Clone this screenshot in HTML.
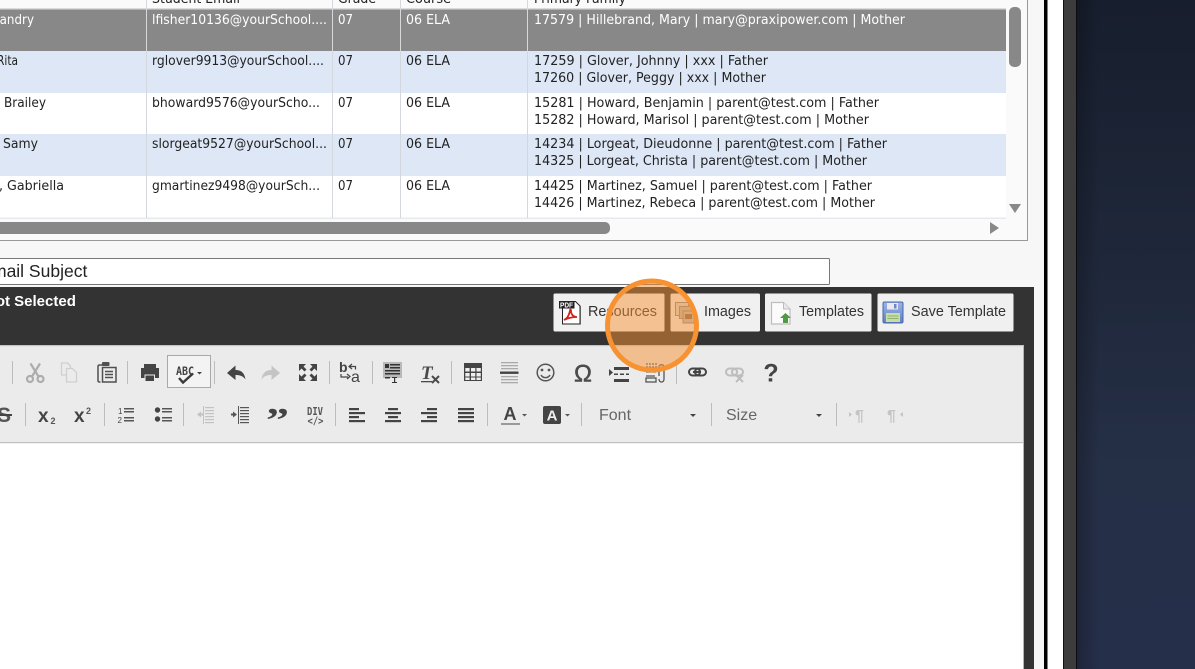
<!DOCTYPE html>
<html><head><meta charset="utf-8"><style>
html,body{margin:0;padding:0;width:1195px;height:669px;overflow:hidden;background:#f7f7f7}
svg{display:block}
.g text{font-family:"DejaVu Sans",sans-serif;font-size:13px;fill:#222}
.g text.w{fill:#fff}
.b text{font-family:"Liberation Sans",sans-serif;font-size:14.5px;fill:#333}
</style></head><body>
<svg width="1195" height="669" viewBox="0 0 1195 669" xmlns="http://www.w3.org/2000/svg">
<defs>
<linearGradient id="nv" x1="0" y1="0" x2="0" y2="1"><stop offset="0" stop-color="#171e2d"/><stop offset=".45" stop-color="#20293c"/><stop offset=".7" stop-color="#252f46"/><stop offset="1" stop-color="#262f4a"/></linearGradient>
<linearGradient id="nh" x1="0" y1="0" x2="1" y2="0"><stop offset="0" stop-color="#000" stop-opacity=".22"/><stop offset="1" stop-color="#000" stop-opacity="0"/></linearGradient>
<linearGradient id="fl" x1="0" y1="0" x2="0" y2="1"><stop offset="0" stop-color="#9db4e8"/><stop offset="1" stop-color="#5f7fc8"/></linearGradient>
</defs>
<rect width="1195" height="669" fill="#f7f7f7"/>
<!-- right side -->
<rect x="1044" y="0" width="3.5" height="669" fill="#000"/>
<rect x="1047.5" y="0" width="15.5" height="669" fill="#fff"/>
<rect x="1063" y="0" width="14" height="669" fill="#3c3c3c"/>
<rect x="1063" y="0" width="1" height="669" fill="#111"/>
<rect x="1076" y="0" width="1.2" height="669" fill="#0c0c10"/>
<rect x="1077" y="0" width="118" height="669" fill="url(#nv)"/>
<rect x="1077" y="0" width="22" height="669" fill="url(#nh)"/>

<!-- grid panel -->
<rect x="-2" y="-2" width="1029.5" height="242.5" fill="#fafafa" stroke="#999" stroke-width="1"/>
<rect x="0" y="8" width="1006" height="1.5" fill="#dcdcdc"/>
<rect x="0" y="9.5" width="1006" height="41.5" fill="#888"/>
<rect x="0" y="51" width="1006" height="42" fill="#dde7f6"/>
<rect x="0" y="93" width="1006" height="41" fill="#fff"/>
<rect x="0" y="134" width="1006" height="42" fill="#dde7f6"/>
<rect x="0" y="176" width="1006" height="42" fill="#fff"/>
<rect x="0" y="217.5" width="1006" height="1.5" fill="#e6e9ee"/>
<g fill="#d4d8de">
<rect x="146" y="0" width="1" height="218"/><rect x="332" y="0" width="1" height="218"/><rect x="400" y="0" width="1" height="218"/><rect x="527" y="0" width="1" height="218"/>
</g>
<g fill="#d8d8d8"><rect x="146" y="9.5" width="1" height="41.5"/><rect x="332" y="9.5" width="1" height="41.5"/><rect x="400" y="9.5" width="1" height="41.5"/><rect x="527" y="9.5" width="1" height="41.5"/></g>
<g class="g">
<text x="152" y="3" textLength="88" lengthAdjust="spacingAndGlyphs">Student Email</text>
<text x="338" y="3" textLength="38" lengthAdjust="spacingAndGlyphs">Grade</text>
<text x="406" y="3" textLength="45" lengthAdjust="spacingAndGlyphs">Course</text>
<text x="534" y="3" textLength="92" lengthAdjust="spacingAndGlyphs">Primary Family</text>

<text class="w" x="-7" y="24" textLength="41" lengthAdjust="spacingAndGlyphs">Landry</text>
<text class="w" x="152" y="24" textLength="175" lengthAdjust="spacingAndGlyphs">lfisher10136@yourSchool....</text>
<text class="w" x="338" y="24" textLength="15" lengthAdjust="spacingAndGlyphs">07</text>
<text class="w" x="406" y="24" textLength="44" lengthAdjust="spacingAndGlyphs">06 ELA</text>
<text class="w" x="534" y="24" textLength="371" lengthAdjust="spacingAndGlyphs">17579 | Hillebrand, Mary | mary@praxipower.com | Mother</text>

<text x="-3" y="65" textLength="21" lengthAdjust="spacingAndGlyphs">Rita</text>
<text x="152" y="65" textLength="172" lengthAdjust="spacingAndGlyphs">rglover9913@yourSchool....</text>
<text x="338" y="65" textLength="15" lengthAdjust="spacingAndGlyphs">07</text>
<text x="406" y="65" textLength="44" lengthAdjust="spacingAndGlyphs">06 ELA</text>
<text x="534" y="65" textLength="234" lengthAdjust="spacingAndGlyphs">17259 | Glover, Johnny | xxx | Father</text>
<text x="534" y="82" textLength="232" lengthAdjust="spacingAndGlyphs">17260 | Glover, Peggy | xxx | Mother</text>

<text x="4" y="107" textLength="42" lengthAdjust="spacingAndGlyphs">Brailey</text>
<text x="152" y="107" textLength="168" lengthAdjust="spacingAndGlyphs">bhoward9576@yourScho...</text>
<text x="338" y="107" textLength="15" lengthAdjust="spacingAndGlyphs">07</text>
<text x="406" y="107" textLength="44" lengthAdjust="spacingAndGlyphs">06 ELA</text>
<text x="534" y="107" textLength="345" lengthAdjust="spacingAndGlyphs">15281 | Howard, Benjamin | parent@test.com | Father</text>
<text x="534" y="124" textLength="335" lengthAdjust="spacingAndGlyphs">15282 | Howard, Marisol | parent@test.com | Mother</text>

<text x="3" y="148" textLength="35" lengthAdjust="spacingAndGlyphs">Samy</text>
<text x="152" y="148" textLength="175" lengthAdjust="spacingAndGlyphs">slorgeat9527@yourSchool...</text>
<text x="338" y="148" textLength="15" lengthAdjust="spacingAndGlyphs">07</text>
<text x="406" y="148" textLength="44" lengthAdjust="spacingAndGlyphs">06 ELA</text>
<text x="534" y="148" textLength="353" lengthAdjust="spacingAndGlyphs">14234 | Lorgeat, Dieudonne | parent@test.com | Father</text>
<text x="534" y="165" textLength="333" lengthAdjust="spacingAndGlyphs">14325 | Lorgeat, Christa | parent@test.com | Mother</text>

<text x="-1" y="190" textLength="65" lengthAdjust="spacingAndGlyphs">, Gabriella</text>
<text x="152" y="190" textLength="168" lengthAdjust="spacingAndGlyphs">gmartinez9498@yourSch...</text>
<text x="338" y="190" textLength="15" lengthAdjust="spacingAndGlyphs">07</text>
<text x="406" y="190" textLength="44" lengthAdjust="spacingAndGlyphs">06 ELA</text>
<text x="534" y="190" textLength="338" lengthAdjust="spacingAndGlyphs">14425 | Martinez, Samuel | parent@test.com | Father</text>
<text x="534" y="207" textLength="341" lengthAdjust="spacingAndGlyphs">14426 | Martinez, Rebeca | parent@test.com | Mother</text>
</g>
<!-- scrollbars -->
<rect x="-10" y="222" width="620" height="12" rx="5" fill="#888"/>
<path d="M990 222l9 6-9 6z" fill="#888"/>
<rect x="1009" y="7" width="12" height="60" rx="5" fill="#888"/>
<path d="M1009 204h12l-6 9z" fill="#888"/>

<!-- subject -->
<rect x="-3" y="258.5" width="832.5" height="26" rx="1" fill="#fff" stroke="#777"/>
<text x="-19.7" y="277" font-family="Liberation Sans, sans-serif" font-size="17.5" fill="#222">Email Subject</text>

<!-- dark panel -->
<rect x="0" y="287" width="1034" height="382" fill="#333"/>
<text x="-15" y="306" font-family="Liberation Sans, sans-serif" font-size="15" font-weight="700" fill="#fff">Not Selected</text>

<!-- buttons -->
<g fill="#f0f0f0">
<rect x="553.5" y="293.5" width="111" height="38" rx="1.5"/>
<rect x="670.5" y="293.5" width="89.5" height="38" rx="1.5"/>
<rect x="765" y="293.5" width="106.5" height="38" rx="1.5"/>
<rect x="877.5" y="293.5" width="136" height="38" rx="1.5"/>
</g>
<g class="b">
<text x="588" y="316" textLength="69" lengthAdjust="spacingAndGlyphs">Resources</text>
<text x="704" y="316" textLength="47" lengthAdjust="spacingAndGlyphs">Images</text>
<text x="799" y="316" textLength="65" lengthAdjust="spacingAndGlyphs">Templates</text>
<text x="911" y="316" textLength="95" lengthAdjust="spacingAndGlyphs">Save Template</text>
</g>
<!-- pdf icon -->
<path d="M562.5 301.5h13l4.5 4.5v18h-17.5z" fill="#fff" stroke="#222" stroke-width="1"/>
<rect x="579.5" y="306" width="1.2" height="18.5" fill="#222"/>
<rect x="559" y="301" width="15.5" height="7.5" fill="#222"/>
<text x="560" y="307.5" font-family="Liberation Sans, sans-serif" font-size="7" font-weight="700" fill="#fff" textLength="13" lengthAdjust="spacingAndGlyphs">PDF</text>
<path d="M564 320c3-1 5-5 6-9 0-2 1-2 1 0 0 3 2 6 6 6-4 0-9 1-13 3z" fill="none" stroke="#d5231d" stroke-width="1.8"/>
<!-- images icon -->
<g stroke="#8a8a8a" stroke-width="1" fill="#d8d8d8">
<rect x="675.5" y="302.5" width="13" height="13"/><rect x="679.5" y="306.5" width="12" height="12" fill="#c9b9a4"/><rect x="683" y="311" width="11" height="12" fill="#bcbcbc"/>
</g>
<rect x="685" y="314" width="7" height="5" fill="#8b6b50"/>
<!-- template icon -->
<path d="M771.5 302.5h12l6.500 6.500v15h-18.500z" fill="#fbfbfb" stroke="#bdbdbd" stroke-width="1.200"/>
<path d="M783.5 302.5v6.500h6.500" fill="#e8e8e8" stroke="#bdbdbd"/>
<path d="M780 318l5.500-5 5.500 5h-3v5h-5v-5z" fill="#4f9a45"/>
<!-- save icon -->
<rect x="883" y="302" width="20" height="21" rx="1.500" fill="url(#fl)" stroke="#4a66a8"/>
<rect x="887" y="303" width="11" height="6.500" fill="#e8e8ee"/><rect x="894" y="304" width="2.500" height="4.500" fill="#6d86c4"/>
<rect x="886" y="313" width="14" height="9" fill="#c6dfa0"/><rect x="887.500" y="315.500" width="11" height="1" fill="#8fb070"/><rect x="887.500" y="318" width="11" height="1" fill="#8fb070"/>

<!-- editor -->
<rect x="0" y="346" width="1024" height="323" fill="#fff"/>
<rect x="0" y="346" width="1024" height="96" fill="#ebebeb"/>
<rect x="0" y="345" width="1024" height="1.200" fill="#c4c4c4"/>
<rect x="0" y="442" width="1024" height="1.200" fill="#c0c0c0"/>
<rect x="1023" y="346" width="1" height="323" fill="#b5b5b5"/>

<!-- separators -->
<g fill="#bdbdbd">
<rect x="12" y="361" width="1" height="23"/><rect x="127" y="361" width="1" height="23"/><rect x="214" y="361" width="1" height="23"/><rect x="329" y="361" width="1" height="23"/><rect x="372" y="361" width="1" height="23"/><rect x="451" y="361" width="1" height="23"/><rect x="676" y="361" width="1" height="23"/>
<rect x="25" y="403" width="1" height="23"/><rect x="104" y="403" width="1" height="23"/><rect x="183" y="403" width="1" height="23"/><rect x="335" y="403" width="1" height="23"/><rect x="487" y="403" width="1" height="23"/><rect x="581" y="403" width="1" height="23"/><rect x="711" y="403" width="1" height="23"/><rect x="836" y="403" width="1" height="23"/>
</g>

<!-- row 1 icons -->
<g fill="none" stroke="#acacac" stroke-width="2.200"><circle cx="30" cy="379" r="3"/><circle cx="40.500" cy="379" r="3"/><path d="M32 376.500l8-13M38.500 376.500l-8-13"/></g>
<g fill="none" stroke="#cfcfcf" stroke-width="1.300"><path d="M66 375h-4.500v-12h6l3 3v2"/><path d="M66.500 368.500h6l4 4v9.500h-10z"/></g>
<g fill="none" stroke="#505050" stroke-width="1.500"><path d="M103 365h-3.500c-1 0-1.500.5-1.500 1.500v14c0 1 .5 1.500 1.500 1.500h1"/><rect x="102.500" y="367.500" width="13.500" height="14.500"/><path d="M105 371.500h8M105 374.500h8M105 377.500h8"/></g><rect x="102" y="362" width="7.500" height="4" rx="1" fill="#505050"/>
<path d="M144 364h12v4h3v10h-4v-3h-9v3h-5v-10h3z" fill="#444"/><rect x="145" y="375" width="9.500" height="6.500" fill="#444" stroke="#ebebeb" stroke-width="1"/>
<rect x="167.500" y="355.500" width="43" height="32" fill="#f3f3f3" stroke="#a9a9a9"/>
<text x="176" y="375" font-family="DejaVu Sans Mono, monospace" font-size="11.500" font-weight="700" fill="#444" textLength="18" lengthAdjust="spacingAndGlyphs">ABC</text>
<path d="M179 378l4 4.500 10-9" fill="none" stroke="#3a3a3a" stroke-width="2.400"/>
<path d="M197 372h5l-2.500 2.500z" fill="#444"/>
<path d="M227 373l8.500-7.500v4.500c6 0 9 3 10 9.500-2.500-3.500-5.500-4.500-10-4.500v5z" fill="#444"/>
<path d="M280 373l-8.500-7.500v4.500c-6 0-9 3-10 9.500 2.500-3.500 5.500-4.500 10-4.500v5z" fill="#c4c4c4"/>
<g fill="#444"><path d="M299 364h7l-2.500 2.500 3 3-2 2-3-3-2.500 2.500z"/><path d="M317 364h-7l2.500 2.500-3 3 2 2 3-3 2.500 2.500z"/><path d="M299 381h7l-2.500-2.500 3-3-2-2-3 3-2.500-2.500z"/><path d="M317 381h-7l2.500-2.500-3-3 2-2 3 3 2.500-2.500z"/></g>
<text x="339" y="372" font-family="Liberation Sans, sans-serif" font-size="14" font-weight="700" fill="#444">b</text>
<text x="351" y="382" font-family="Liberation Sans, sans-serif" font-size="16" fill="#444">a</text>
<path d="M352 364l-3 2.500 3 2.500M349.500 366.500h6v3M347 379l3-2.500-3-2.500" fill="none" stroke="#444" stroke-width="1.200"/><path d="M341 374v3h7" fill="none" stroke="#444" stroke-width="1.200"/>
<rect x="383" y="362" width="19" height="16" fill="#b9b9b9"/>
<g fill="#333"><rect x="385" y="364" width="4" height="4"/><rect x="390" y="364" width="10" height="1.500"/><rect x="390" y="367" width="10" height="1.500"/><rect x="385" y="370" width="15" height="1.500"/><rect x="385" y="373" width="15" height="1.500"/><rect x="385" y="377" width="5" height="1.500"/><rect x="392" y="377" width="5" height="1"/><rect x="394" y="377" width="1.200" height="6"/><rect x="392" y="382" width="5" height="1"/></g>
<text x="421" y="379" font-family="Liberation Serif, serif" font-size="19" font-weight="700" font-style="italic" fill="#4a4a4a">T</text>
<rect x="421" y="381" width="11" height="1.300" fill="#4a4a4a"/>
<path d="M432 376l7 7M439 376l-7 7" stroke="#4a4a4a" stroke-width="2"/>
<rect x="464" y="363" width="18" height="18" fill="#444"/><g fill="#eee"><rect x="465.300" y="368" width="4.300" height="3.500"/><rect x="471" y="368" width="4.300" height="3.500"/><rect x="476.500" y="368" width="4.300" height="3.500"/><rect x="465.300" y="373" width="4.300" height="3.500"/><rect x="471" y="373" width="4.300" height="3.500"/><rect x="476.500" y="373" width="4.300" height="3.500"/><rect x="465.300" y="377.500" width="4.300" height="2.500"/><rect x="471" y="377.500" width="4.300" height="2.500"/><rect x="476.500" y="377.500" width="4.300" height="2.500"/></g>
<g fill="#aaa"><rect x="501" y="362" width="17" height="1.300"/><rect x="501" y="365" width="17" height="1.300"/><rect x="501" y="368" width="17" height="1.300"/><rect x="501" y="376" width="17" height="1.300"/><rect x="501" y="379" width="17" height="1.300"/><rect x="501" y="382" width="17" height="1.300"/></g><rect x="500" y="371.500" width="18.500" height="2.400" fill="#444"/>
<circle cx="545.500" cy="372.500" r="8.300" fill="none" stroke="#555" stroke-width="1.500"/><circle cx="542" cy="370" r="1.400" fill="#555"/><circle cx="549" cy="370" r="1.400" fill="#555"/><path d="M541 375c2 3.500 7 3.500 9 0" fill="none" stroke="#555" stroke-width="1.500"/>
<text x="583" y="381.500" text-anchor="middle" font-family="Liberation Sans, sans-serif" font-size="24" stroke="#4a4a4a" stroke-width=".5" fill="#4a4a4a">Ω</text>
<path d="M609 369l4 3.500-4 3.500z" fill="#444"/><g fill="#444"><rect x="614" y="367" width="15" height="3"/><rect x="614" y="379" width="15" height="3"/><rect x="614" y="373.500" width="4" height="1.500"/><rect x="620" y="373.500" width="4" height="1.500"/><rect x="626" y="373.500" width="3" height="1.500"/></g>
<g fill="none" stroke="#555" stroke-width="1.300"><path d="M646 364h12" stroke-dasharray="2 1"/><path d="M646 367h12" stroke-dasharray="2 1"/><path d="M646 372h10M646 376h9"/><rect x="646" y="378" width="10" height="4"/><path d="M659 376v-9c0-3 5-3 5 0v12c0 4-5 4-5 0"/></g>
<g fill="none" stroke="#444" stroke-width="2"><rect x="689" y="368.500" width="11" height="7" rx="3.500"/><rect x="695" y="368.500" width="11" height="7" rx="3.500"/></g><rect x="693" y="371" width="8" height="2" fill="#444"/>
<g fill="none" stroke="#bdbdbd" stroke-width="2"><rect x="726" y="368.500" width="11" height="7" rx="3.500"/><rect x="732" y="368.500" width="11" height="7" rx="3.500"/><path d="M736 375l7 7M743 375l-7 7"/></g>
<text x="771" y="381.500" text-anchor="middle" font-family="Liberation Sans, sans-serif" font-size="25" font-weight="700" fill="#444">?</text>

<!-- row 2 icons -->
<text x="-3" y="422" font-family="Liberation Sans, sans-serif" font-size="21" font-weight="700" fill="#555">S</text>
<rect x="-2" y="414" width="14" height="2" fill="#444"/>
<text x="38" y="422" font-family="Liberation Sans, sans-serif" font-size="19" font-weight="700" fill="#444">x</text><text x="50.500" y="424" font-family="Liberation Sans, sans-serif" font-size="9" font-weight="700" fill="#555">2</text>
<text x="74" y="422" font-family="Liberation Sans, sans-serif" font-size="19" font-weight="700" fill="#444">x</text><text x="86" y="414" font-family="Liberation Sans, sans-serif" font-size="9" font-weight="700" fill="#555">2</text>
<text x="118" y="414" font-family="Liberation Sans, sans-serif" font-size="8" fill="#444">1</text><text x="117.500" y="423" font-family="Liberation Sans, sans-serif" font-size="8" fill="#444">2</text>
<g fill="#555"><rect x="124" y="408" width="10" height="1.500"/><rect x="124" y="411" width="10" height="1.500"/><rect x="124" y="417" width="10" height="1.500"/><rect x="124" y="420" width="10" height="1.500"/></g>
<circle cx="157.500" cy="410" r="2.700" fill="#444"/><circle cx="157.500" cy="419" r="2.700" fill="#444"/>
<g fill="#555"><rect x="162" y="408" width="10" height="1.500"/><rect x="162" y="411" width="10" height="1.500"/><rect x="162" y="417" width="10" height="1.500"/><rect x="162" y="420" width="10" height="1.500"/></g>
<g fill="#c2c2c2"><rect x="205" y="407" width="9" height="1.200"/><rect x="205" y="410" width="9" height="1.200"/><rect x="205" y="413" width="9" height="1.200"/><rect x="205" y="416" width="9" height="1.200"/><rect x="205" y="419" width="9" height="1.200"/><rect x="205" y="422" width="9" height="1.200"/><rect x="203" y="406" width="1" height="18"/><path d="M197 414.500l4-3v2h2v2h-2v2z"/></g>
<g fill="#555"><rect x="240" y="407" width="9" height="1.200"/><rect x="240" y="410" width="9" height="1.200"/><rect x="240" y="413" width="9" height="1.200"/><rect x="240" y="416" width="9" height="1.200"/><rect x="240" y="419" width="9" height="1.200"/><rect x="240" y="422" width="9" height="1.200"/><rect x="238" y="406" width="1" height="18"/><path d="M237 414.500l-4-3v2h-2v2h2v2z"/></g>
<text x="266" y="431" font-family="Liberation Serif, serif" font-size="34" font-weight="700" fill="#444" textLength="23" lengthAdjust="spacingAndGlyphs">”</text>
<text x="307" y="415" font-family="DejaVu Sans Mono, monospace" font-size="11" font-weight="700" fill="#555" textLength="16" lengthAdjust="spacingAndGlyphs">DIV</text>
<text x="307.500" y="424.500" font-family="DejaVu Sans Mono, monospace" font-size="10.500" font-weight="700" fill="#555" textLength="16" lengthAdjust="spacingAndGlyphs">&lt;/&gt;</text>
<g fill="#444">
<rect x="349" y="408" width="10" height="2.200"/><rect x="349" y="412" width="16" height="2.200"/><rect x="349" y="416" width="10" height="2.200"/><rect x="349" y="420" width="16" height="2.200"/>
<rect x="388" y="408" width="10" height="2.200"/><rect x="385" y="412" width="16" height="2.200"/><rect x="388" y="416" width="10" height="2.200"/><rect x="385" y="420" width="16" height="2.200"/>
<rect x="427" y="408" width="10" height="2.200"/><rect x="421" y="412" width="16" height="2.200"/><rect x="427" y="416" width="10" height="2.200"/><rect x="421" y="420" width="16" height="2.200"/>
<rect x="458" y="408" width="16" height="2.200"/><rect x="458" y="412" width="16" height="2.200"/><rect x="458" y="416" width="16" height="2.200"/><rect x="458" y="420" width="16" height="2.200"/>
</g>
<text x="510" y="420" text-anchor="middle" font-family="Liberation Sans, sans-serif" font-size="18" font-weight="700" fill="#444">A</text>
<rect x="501" y="423" width="19" height="2" fill="#999"/>
<path d="M522 414h5l-2.500 2.500z" fill="#555"/>
<rect x="543" y="406" width="18" height="18" rx="2" fill="#444"/>
<text x="552" y="420.500" text-anchor="middle" font-family="Liberation Sans, sans-serif" font-size="15" font-weight="700" fill="#eee">A</text>
<path d="M565 414h5l-2.500 2.500z" fill="#555"/>
<text x="599" y="420" font-family="Liberation Sans, sans-serif" font-size="16" fill="#666">Font</text>
<path d="M690 414h6l-3 3z" fill="#444"/>
<text x="726" y="420" font-family="Liberation Sans, sans-serif" font-size="16" fill="#666">Size</text>
<path d="M816 414h6l-3 3z" fill="#444"/>
<path d="M849 412l3 2.500-3 2.500z" fill="#c4c4c4"/>
<text x="855" y="421" font-family="Liberation Sans, sans-serif" font-size="16" font-weight="700" fill="#c4c4c4">¶</text>
<text x="887" y="421" font-family="Liberation Sans, sans-serif" font-size="16" font-weight="700" fill="#c4c4c4">¶</text>
<path d="M903 412l-3 2.500 3 2.500z" fill="#c4c4c4"/>

<!-- highlight circle -->
<circle cx="652" cy="325.500" r="44.500" fill="#f79233" fill-opacity=".5" stroke="#f79233" stroke-width="5"/>
</svg>
</body></html>
